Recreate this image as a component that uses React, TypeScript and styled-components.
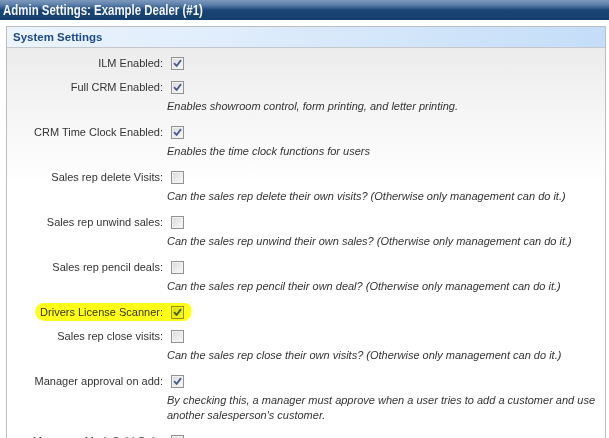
import React from "react";
import styled, { createGlobalStyle } from "styled-components";

const GlobalStyle = createGlobalStyle`
  html, body {
    margin: 0;
    padding: 0;
    overflow: hidden;
    background: #ffffff;
    font-family: "Liberation Sans", Arial, sans-serif;
  }
`;

const Page = styled.div`
  width: 609px;
  height: 438px;
  overflow: hidden;
  background: #fff;
`;

const TitleBar = styled.div`
  height: 20px;
  display: flex;
  align-items: center;
  padding-left: 3px;
  background: linear-gradient(
    #7d99bc 0%,
    #5f82ab 22%,
    #3a6394 38%,
    #1a4574 50%,
    #143e6b 100%
  );
`;

const Title = styled.h1`
  margin: 0;
  font-family: "Liberation Sans", Arial, sans-serif;
  font-size: 14.5px;
  font-weight: bold;
  color: #f4f6f9;
  line-height: 20px;
  white-space: nowrap;
  transform: scaleX(0.79);
  transform-origin: left center;
`;

const Panel = styled.section`
  margin: 6px 3px 0 6px;
  border: 1px solid #bdbdbd;
  border-bottom: none;
`;

const PanelHeader = styled.div`
  height: 20px;
  display: flex;
  align-items: center;
  padding-left: 6px;
  border-bottom: 1px solid #c4c8cc;
  background: linear-gradient(90deg, #ecf4fd 0%, #dcebfb 45%, #c4ddf8 100%);
  font-size: 11.5px;
  font-weight: bold;
  color: #1d4a86;
`;

const PanelBody = styled.div`
  padding: 3px 0 20px 0;
  background: linear-gradient(#ececec 0px, #f6f6f6 70px, #ffffff 140px);
`;

const Row = styled.div<{ $highlight?: boolean }>`
  position: relative;
  display: grid;
  grid-template-columns: 156px 1fr;
  column-gap: 4px;
  ${(p) =>
    p.$highlight &&
    `
    &::after {
      content: "";
      position: absolute;
      left: 28px;
      top: 3px;
      width: 156px;
      height: 18px;
      border-radius: 9px 6px 8px 10px;
      background: #ffff1a;
      mix-blend-mode: multiply;
      pointer-events: none;
    }
  `}
`;

const Label = styled.div`
  height: 24px;
  line-height: 24px;
  text-align: right;
  font-size: 11px;
  color: #333;
  white-space: nowrap;
`;

const Control = styled.div`
  height: 24px;
  display: flex;
  align-items: center;
`;

const Box = styled.span<{ $checked: boolean }>`
  box-sizing: border-box;
  width: 13px;
  height: 13px;
  margin-left: 4px;
  border: 1px solid #929292;
  background: linear-gradient(135deg, #d8d8d8 0%, #eaeaea 50%, #fafafa 100%);
  box-shadow: inset 0 0 0 1px #f2f2f2;
  display: flex;
  align-items: center;
  justify-content: center;
`;

const Description = styled.div`
  grid-column: 2;
  padding: 0 6px 6px 0;
  font-size: 11px;
  line-height: 15px;
  font-style: italic;
  color: #333;
`;

type Setting = {
  label: string;
  checked: boolean;
  desc?: string;
  highlight?: boolean;
};

const settings: Setting[] = [
  { label: "ILM Enabled:", checked: true },
  {
    label: "Full CRM Enabled:",
    checked: true,
    desc: "Enables showroom control, form printing, and letter printing.",
  },
  {
    label: "CRM Time Clock Enabled:",
    checked: true,
    desc: "Enables the time clock functions for users",
  },
  {
    label: "Sales rep delete Visits:",
    checked: false,
    desc: "Can the sales rep delete their own visits? (Otherwise only management can do it.)",
  },
  {
    label: "Sales rep unwind sales:",
    checked: false,
    desc: "Can the sales rep unwind their own sales? (Otherwise only management can do it.)",
  },
  {
    label: "Sales rep pencil deals:",
    checked: false,
    desc: "Can the sales rep pencil their own deal? (Otherwise only management can do it.)",
  },
  { label: "Drivers License Scanner:", checked: true, highlight: true },
  {
    label: "Sales rep close visits:",
    checked: false,
    desc: "Can the sales rep close their own visits? (Otherwise only management can do it.)",
  },
  {
    label: "Manager approval on add:",
    checked: true,
    desc: "By checking this, a manager must approve when a user tries to add a customer and use another salesperson's customer.",
  },
  { label: "Managers Mark Sold Only:", checked: false },
];

const Checkbox: React.FC<{ checked: boolean }> = ({ checked }) => (
  <Box $checked={checked} role="checkbox" aria-checked={checked}>
    {checked && (
      <svg width="9" height="9" viewBox="0 0 9 9">
        <path
          d="M1.5 4.6 L3.6 7 L7.6 1.6"
          fill="none"
          stroke="#4a5a8e"
          strokeWidth="1.8"
          strokeLinecap="round"
          strokeLinejoin="round"
        />
      </svg>
    )}
  </Box>
);

export default function App() {
  return (
    <Page>
      <GlobalStyle />
      <TitleBar>
        <Title>Admin Settings: Example Dealer (#1)</Title>
      </TitleBar>
      <Panel>
        <PanelHeader>System Settings</PanelHeader>
        <PanelBody>
          {settings.map((s) => (
            <Row key={s.label} $highlight={s.highlight}>
              <Label>{s.label}</Label>
              <Control>
                <Checkbox checked={s.checked} />
              </Control>
              {s.desc && <Description>{s.desc}</Description>}
            </Row>
          ))}
        </PanelBody>
      </Panel>
    </Page>
  );
}
